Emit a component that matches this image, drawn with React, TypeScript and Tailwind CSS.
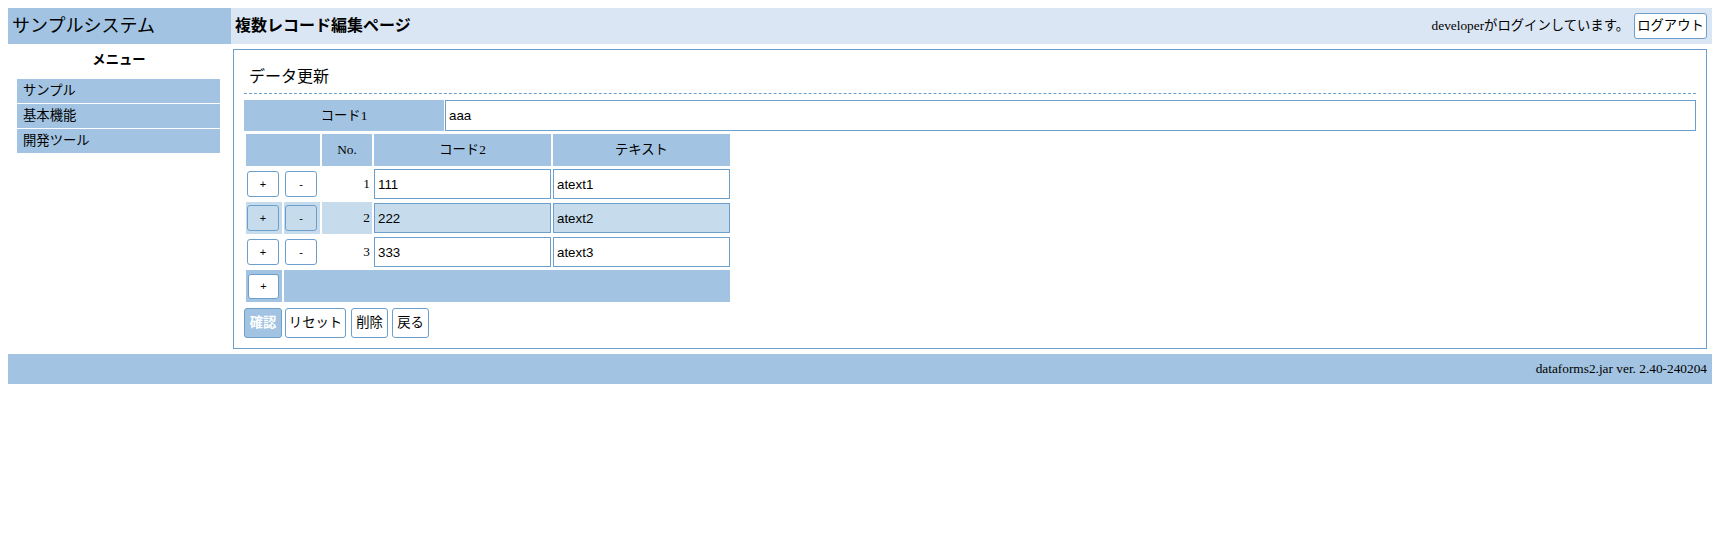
import React from "react";

const rows = [
  { no: 1, code: "111", text: "atext1", hi: false },
  { no: 2, code: "222", text: "atext2", hi: true },
  { no: 3, code: "333", text: "atext3", hi: false },
];

function SmallBtn({ label, hi }: { label: string; hi?: boolean }) {
  return (
    <button
      className={
        hi
          ? "ml-[1px] w-[32px] h-[26px] border border-[#6d9fcd] rounded-[3px] bg-[#c6dcec] text-[11px] leading-none font-['Liberation_Sans',sans-serif]"
          : "ml-[1px] w-[32px] h-[26px] border border-[#6d9fcd] rounded-[3px] bg-white text-[11px] leading-none font-['Liberation_Sans',sans-serif]"
      }
    >
      {label}
    </button>
  );
}

export default function App() {
  return (
    <div className="p-2 text-[13.33px] leading-[20px] text-black font-['Liberation_Serif','Noto_Sans_CJK_JP',serif]">
      {/* header */}
      <div className="flex h-[36px]">
        <div className="w-[223px] bg-[#a2c4e2] flex items-center pl-[4px] text-[18px]">
          サンプルシステム
        </div>
        <div className="flex-1 bg-[#dae6f3] flex items-center justify-between pl-[4px] pr-[5px]">
          <div className="font-bold text-[16px]">複数レコード編集ページ</div>
          <div className="flex items-center gap-[5px]">
            <span>developerがログインしています。</span>
            <button className="h-[26px] w-[73px] border border-[#6d9fcd] rounded-[3px] bg-white">
              ログアウト
            </button>
          </div>
        </div>
      </div>

      {/* body */}
      <div className="flex">
        <div className="w-[225px] shrink-0">
          <div className="w-[222px] mt-[6px] text-center font-bold">メニュー</div>
          <div className="mt-[9px] ml-[9px] w-[203px] flex flex-col gap-[1px]">
            <div className="h-[24px] bg-[#a2c4e2] pl-[6px] flex items-center">サンプル</div>
            <div className="h-[24px] bg-[#a2c4e2] pl-[6px] flex items-center">基本機能</div>
            <div className="h-[24px] bg-[#a2c4e2] pl-[6px] flex items-center">開発ツール</div>
          </div>
        </div>

        <div className="flex-1 mt-[5px] mr-[5px] mb-[5px] border border-[#6d9fcd] px-[10px] pb-[10px]">
          <div className="h-[44px] border-b border-dashed border-[#6d9fcd] pl-[5px] pt-[15px] text-[16px] leading-[24px]">
            データ更新
          </div>
          <div className="mt-[6px] flex h-[31px] gap-[1px]">
            <div className="w-[200px] bg-[#a2c4e2] flex items-center justify-center">コード1</div>
            <input
              readOnly
              value="aaa"
              className="flex-1 h-[31px] border border-[#6d9fcd] bg-white px-[3px] text-[13.33px] font-['Liberation_Sans',sans-serif] outline-none"
            />
          </div>

          <table className="mt-[1px] border-separate border-spacing-[2px]">
            <thead>
              <tr className="h-[32px]">
                <th colSpan={2} className="bg-[#a2c4e2] font-normal p-0"></th>
                <th className="w-[50px] bg-[#a2c4e2] font-normal p-0">No.</th>
                <th className="w-[177px] bg-[#a2c4e2] font-normal p-0">コード2</th>
                <th className="w-[177px] bg-[#a2c4e2] font-normal p-0">テキスト</th>
              </tr>
            </thead>
            <tbody>
              {rows.map((r) => (
                <tr key={r.no} className="h-[32px]">
                  <td className={r.hi ? "w-[36px] p-0 bg-[#c6dcec]" : "w-[36px] p-0"}>
                    <div className="flex items-center">
                      <SmallBtn label="+" hi={r.hi} />
                    </div>
                  </td>
                  <td className={r.hi ? "w-[36px] p-0 bg-[#c6dcec]" : "w-[36px] p-0"}>
                    <div className="flex items-center">
                      <SmallBtn label="-" hi={r.hi} />
                    </div>
                  </td>
                  <td className={r.hi ? "p-0 pr-[2px] text-right bg-[#c6dcec]" : "p-0 pr-[2px] text-right"}>
                    {r.no}
                  </td>
                  <td className="p-0">
                    <input
                      readOnly
                      value={r.code}
                      className={
                        r.hi
                          ? "block w-[177px] h-[30px] border border-[#6d9fcd] bg-[#c6dcec] px-[3px] text-[13.33px] font-['Liberation_Sans',sans-serif] outline-none"
                          : "block w-[177px] h-[30px] border border-[#6d9fcd] bg-white px-[3px] text-[13.33px] font-['Liberation_Sans',sans-serif] outline-none"
                      }
                    />
                  </td>
                  <td className="p-0">
                    <input
                      readOnly
                      value={r.text}
                      className={
                        r.hi
                          ? "block w-[177px] h-[30px] border border-[#6d9fcd] bg-[#c6dcec] px-[3px] text-[13.33px] font-['Liberation_Sans',sans-serif] outline-none"
                          : "block w-[177px] h-[30px] border border-[#6d9fcd] bg-white px-[3px] text-[13.33px] font-['Liberation_Sans',sans-serif] outline-none"
                      }
                    />
                  </td>
                </tr>
              ))}
              <tr className="h-[32px]">
                <td className="w-[36px] p-0 bg-[#a2c4e2]">
                  <div className="flex items-center pt-[1px]">
                    <button className="ml-[2px] w-[31px] h-[25px] border border-[#6d9fcd] rounded-[3px] bg-white text-[11px] leading-none font-['Liberation_Sans',sans-serif]">
                      +
                    </button>
                  </div>
                </td>
                <td colSpan={4} className="p-0 bg-[#a2c4e2]"></td>
              </tr>
            </tbody>
          </table>

          <div className="mt-[4px] flex h-[30px]">
            <button className="w-[38px] h-[30px] border border-[#6d9fcd] rounded-[3px] bg-[#a2c4e2] text-white font-bold">
              確認
            </button>
            <button className="ml-[3px] w-[61px] h-[30px] border border-[#6d9fcd] rounded-[3px] bg-white">
              リセット
            </button>
            <button className="ml-[5px] w-[37px] h-[30px] border border-[#6d9fcd] rounded-[3px] bg-white">
              削除
            </button>
            <button className="ml-[4px] w-[37px] h-[30px] border border-[#6d9fcd] rounded-[3px] bg-white">
              戻る
            </button>
          </div>
        </div>
      </div>

      {/* footer */}
      <div className="h-[30px] bg-[#a2c4e2] flex items-center justify-end pr-[5px]">
        dataforms2.jar ver. 2.40-240204
      </div>
    </div>
  );
}
